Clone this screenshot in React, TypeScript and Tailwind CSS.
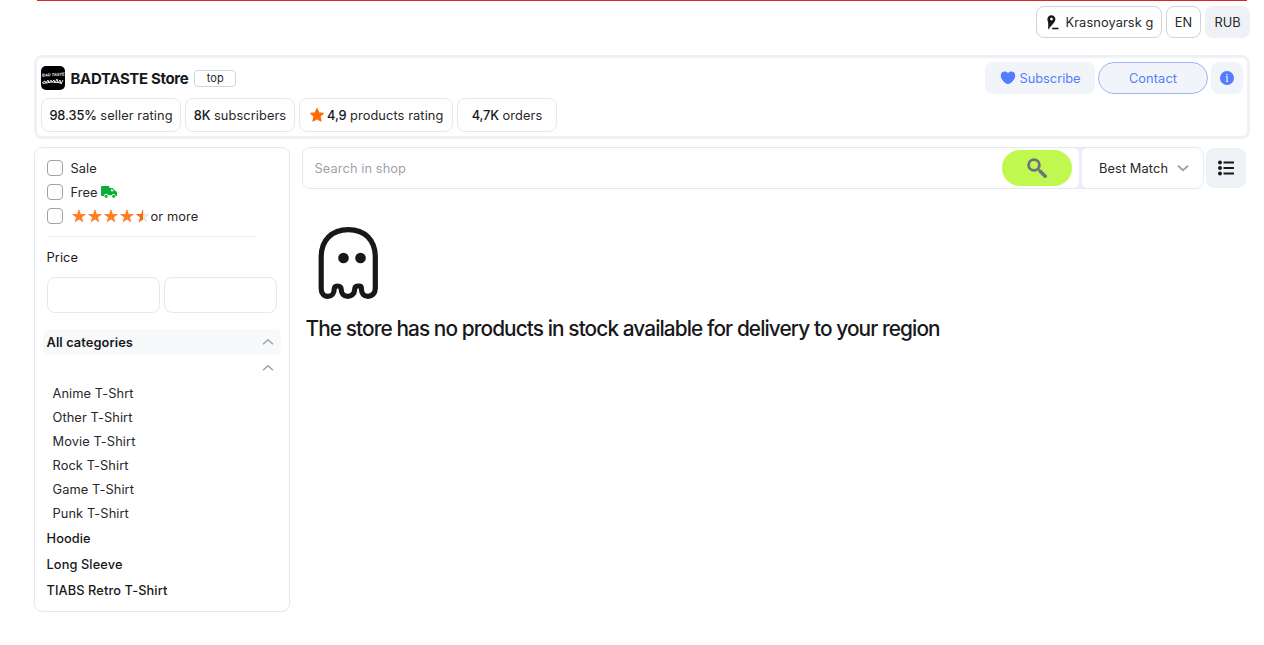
import { useState } from "react";
import type { ReactNode } from "react";
import clsx from "clsx";

const STATS = [
  { value: "98.35%", label: "seller rating", width: "w-[140px]" },
  { value: "8K", label: "subscribers", width: "w-[110px]" },
  { value: "4,9", label: "products rating", width: "w-[154px]", star: true },
  { value: "4,7K", label: "orders", width: "w-[100px]" },
];

const SUBCATEGORIES = [
  "Anime T-Shrt",
  "Other T-Shirt",
  "Movie T-Shirt",
  "Rock T-Shirt",
  "Game T-Shirt",
  "Punk T-Shirt",
];

const CATEGORIES = ["Hoodie", "Long Sleeve", "TIABS Retro T-Shirt"];

const STAR_PATH =
  "M8 .8 9.8 5.9 15.2 6.1 10.9 9.4 12.5 14.6 8 11.5 3.5 14.6 5.1 9.4 .8 6.1 6.2 5.9Z";

function Star({ half = false }: { half?: boolean }) {
  return (
    <svg viewBox="0 0 16 16" className="h-4 w-4">
      <path d={STAR_PATH} fill={half ? "#e5e7eb" : "#ff7f27"} />
      {half ? (
        <path d="M8 .8V11.5L3.5 14.6 5.1 9.4 .8 6.1 6.2 5.9Z" fill="#ff6a00" />
      ) : null}
    </svg>
  );
}

function RoundedStar() {
  return (
    <svg viewBox="0 0 16 16" className="mr-[2.5px] h-4 w-4">
      <path
        d="M8 1.7 9.9 5.9 14.3 6.4 11 9.4 12 14 8 11.7 4 14 5 9.4 1.7 6.4 6.1 5.9Z"
        fill="#ff6a00"
        stroke="#ff6a00"
        strokeWidth="1.2"
        strokeLinejoin="round"
      />
    </svg>
  );
}

function Pin() {
  return (
    <svg viewBox="0 0 12 15" className="mr-[7px] ml-0.5 h-[15px] w-3">
      <path
        fillRule="evenodd"
        d="M4.4.2C2 .2.4 1.9.4 4.3c0 1.7.8 2.500.8 4.200v5.200c0 .7.7.8 1 .1C3.200 11 8.400 7.800 8.400 4.300 8.400 1.900 6.800.2 4.400.2ZM4.500 2.700a1.400 1.400 0 1 1 0 2.800 1.400 1.400 0 0 1 0-2.800Z"
        fill="#18181b"
      />
      <path d="M5.200 13.500H11.500" stroke="#18181b" strokeWidth="1.600" />
    </svg>
  );
}

function StoreLogo() {
  return (
    <div className="flex h-6 w-6 flex-col items-center justify-center rounded-[5px] bg-black text-white">
      <span className="-rotate-3 font-['Liberation_Sans'] text-[4px] leading-[6px] font-bold tracking-normal whitespace-nowrap italic">
        BAD TASTE
      </span>
      <svg viewBox="0 0 22 7" className="h-[7px] w-[22px]">
        <path
          d="M0 5 3 3 4 5 6 2 7 5 9 2 10 4 12 2 13 5 15 1 16 5 18 2 19 6 21 2M1 5.500 10 4 20 5"
          fill="none"
          stroke="#e4e4e7"
          strokeWidth="1"
        />
      </svg>
    </div>
  );
}

function Truck() {
  return (
    <svg viewBox="0 0 16 12" className="ml-[3px] h-3 w-4">
      <path
        d="M1.200 0H7.300Q8.500 0 8.500 1.200V2H11.600L14.400 5Q16 5.200 16 6.600V10H14.800A2.200 2.200 0 0 0 10.600 9.300H7.300A2.200 2.200 0 0 0 3 10H1.200Q0 10 0 8.800V1.200Q0 0 1.200 0ZM10 3.300V5.200H13L11.200 3.300Z"
        fill="#0aad35"
      />
      <circle cx="5.100" cy="10.200" r="1.500" fill="#0aad35" />
      <circle cx="12.700" cy="10.200" r="1.500" fill="#0aad35" />
    </svg>
  );
}

function Chevron({ down = false }: { down?: boolean }) {
  return (
    <svg
      viewBox="0 0 12 8"
      className={clsx("h-2 w-3", down && "rotate-180")}
      fill="none"
      stroke="#a1a1aa"
      strokeWidth={down ? 1.8 : 1.5}
    >
      <path d="M1 6.200 6 1.800 11 6.200" />
    </svg>
  );
}

function Ghost() {
  return (
    <svg viewBox="0 0 60 72" className="ml-3 h-[72px] w-[60px]">
      <path
        d="M3.200 30C3.200 13 14 2.600 30.300 2.600S57.300 13 57.300 30V61.500C57.300 66 54 69.400 50 69.400S43.500 66.500 43.500 62.500 42.500 59 39.800 59 36.500 61 36.500 63.500 34 69.400 29.800 69.400 23.300 66.500 23.300 63 22 59 19.300 59 16 61 16 63.500 14 69.400 9.900 69.400 3.200 66 3.200 61.500Z"
        fill="none"
        stroke="#18181b"
        strokeWidth="5.200"
      />
      <circle cx="25.500" cy="31" r="5.300" fill="#18181b" />
      <circle cx="42.500" cy="31" r="5.300" fill="#18181b" />
    </svg>
  );
}

function FilterRow({ children }: { children: ReactNode }) {
  const [checked, setChecked] = useState(false);

  return (
    <label className="flex h-6 items-center">
      <input
        type="checkbox"
        checked={checked}
        onChange={() => setChecked(!checked)}
        className="mr-[7.5px] h-4 w-4 appearance-none rounded-[4px] border border-[#a1a1aa] bg-white checked:bg-[#557cff]"
      />
      {children}
    </label>
  );
}

function Sidebar() {
  return (
    <aside className="h-[465px] w-64 rounded-lg border border-[#e4e8f0] pt-2">
      <div className="px-3">
        <FilterRow>
          <span className="pt-0.5">Sale</span>
        </FilterRow>
        <FilterRow>
          <span className="pt-0.5">Free</span>
          <Truck />
        </FilterRow>
        <FilterRow>
          <Star />
          <Star />
          <Star />
          <Star />
          <Star half />
          <span className="pt-0.5">or more</span>
        </FilterRow>
        <div className="mt-2 w-[210px] border-t border-[#ececf0]" />
        <div className="mt-[11px] -ml-[0.5px] text-[#18181b]">Price</div>
        <div className="mt-[9px] flex gap-1">
          <input className="h-9 w-[113px] rounded-lg border border-[#e4e8f0] px-2" />
          <input className="h-9 w-[113px] rounded-lg border border-[#e4e8f0] px-2" />
        </div>
      </div>

      <div className="mt-4 ml-2 w-[238px]">
        <div className="flex h-[26px] items-center justify-between rounded-md bg-[#f7f9fb] pr-[7px] pl-[3.5px] font-semibold text-[#18181b]">
          <span className="pt-0.5">All categories</span>
          <Chevron />
        </div>
        <div className="flex h-[26px] items-center justify-end pr-[7px]">
          <Chevron />
        </div>
        <ul className="pl-[9.5px]">
          {SUBCATEGORIES.map((name) => (
            <li key={name} className="h-6 leading-[26px]">
              {name}
            </li>
          ))}
        </ul>
        <ul className="pl-[3.5px] font-medium text-[#18181b]">
          {CATEGORIES.map((name) => (
            <li key={name} className="h-[26px] leading-[28px]">
              {name}
            </li>
          ))}
        </ul>
      </div>
    </aside>
  );
}

function StoreHeader() {
  return (
    <header className="mt-[17px] flex h-[84px] justify-between rounded-lg border-[3px] border-[#eef2f7] p-1">
      <div>
        <div className="flex h-8 items-center">
          <StoreLogo />
          <h1 className="ml-[5.5px] pt-px text-[15px] leading-[23px] font-bold tracking-[-0.35px] text-[#18181b]">
            BADTASTE Store
          </h1>
          <span className="ml-1.5 flex h-[17px] w-[42px] items-center justify-center rounded-[4px] border border-[#cbd5e1] text-[11px] leading-[17px]">
            top
          </span>
        </div>
        <div className="mt-1 flex gap-1">
          {STATS.map((stat) => (
            <div
              key={stat.label}
              className={clsx(
                "flex h-[34px] items-center justify-center rounded-lg border border-[#e6e8f0] whitespace-nowrap",
                stat.width,
              )}
            >
              {stat.star ? <RoundedStar /> : null}
              <span className="mr-[3.5px] pt-0.5 font-medium tracking-[-0.1px] text-[#18181b]">
                {stat.value}
              </span>
              <span className="pt-0.5">{stat.label}</span>
            </div>
          ))}
        </div>
      </div>

      <div className="flex gap-[3px] text-[#557cff]">
        <button className="flex h-8 w-[110px] items-center justify-center rounded-lg bg-[#f1f5f9]">
          <svg viewBox="0 0 16 14" className="mr-[3px] ml-px h-[14px] w-4">
            <path
              d="M8 13.300C5 12.300 1 9 .8 5 .6 2 2.500.6 4.700.6 6.200.6 7.300 1.200 8 2.200 8.700 1.200 9.800.6 11.300.6 13.500.6 15.400 2 15.200 5 15 9 11 12.300 8 13.300Z"
              fill="#557cff"
            />
          </svg>
          <span className="pt-0.5 tracking-normal">Subscribe</span>
        </button>
        <button className="h-8 w-[110px] rounded-full border border-[#9db4ff] bg-[#f1f5f9] pt-0.5">
          Contact
        </button>
        <button
          aria-label="Info"
          className="flex h-8 w-8 items-center justify-center rounded-lg bg-[#f1f5f9]"
        >
          <span className="flex h-[14px] w-[14px] items-center justify-center rounded-full bg-[#557cff] font-['Liberation_Serif'] text-[12px] leading-none text-white">
            i
          </span>
        </button>
      </div>
    </header>
  );
}

function SearchBar() {
  const [query, setQuery] = useState("");

  return (
    <div className="flex items-center gap-0.5">
      <div className="flex h-[42px] w-[902px] overflow-hidden rounded-lg border border-[#e6e8f4] bg-[#eeeefa]">
        <div className="flex w-[776px] items-center rounded-r-md bg-white">
          <input
            value={query}
            onChange={(e) => setQuery(e.target.value)}
            placeholder="Search in shop"
            className="h-full flex-1 pl-[11.5px] outline-none placeholder:text-[#a1a1aa]"
          />
          <button
            aria-label="Search"
            className="mr-[7px] flex h-9 w-[70px] items-center justify-center rounded-full bg-[#c0f850]"
          >
            <svg viewBox="0 0 20 20" className="h-5 w-5" fill="none">
              <circle cx="7" cy="7" r="5.400" stroke="#6b7280" strokeWidth="2.800" />
              <path d="M10.800 10.800 13 13" stroke="#6b7280" strokeWidth="1.800" />
              <path
                d="M13.400 13.400 18.200 18.200"
                stroke="#6b7280"
                strokeWidth="3.600"
                strokeLinecap="round"
              />
            </svg>
          </button>
        </div>
        <button className="ml-[3px] flex flex-1 items-center rounded-l-md bg-white pl-[17px]">
          <span className="pt-0.5">Best Match</span>
          <span className="ml-[9px] flex">
            <Chevron down />
          </span>
        </button>
      </div>
      <button
        aria-label="List view"
        className="flex h-10 w-10 items-center justify-center rounded-lg bg-[#eef1f6]"
      >
        <svg viewBox="0 0 16 16" className="h-4 w-4" fill="#18181b">
          <circle cx="2" cy="2.500" r="2" />
          <circle cx="2" cy="8" r="2" />
          <circle cx="2" cy="13.500" r="2" />
          <path d="M5.500 1.500H16V3.500H5.500ZM5.500 7H16V9H5.500ZM5.500 12.500H16V14.500H5.500Z" />
        </svg>
      </button>
    </div>
  );
}

export default function App() {
  return (
    <div className="h-[645px] overflow-hidden bg-white pr-[14px] pl-[34px] font-[Inter,sans-serif] text-[12.8px] leading-5 tracking-[0.1px] text-[#27272a]">
      <div className="mx-[3px] h-px bg-[#dc2626]" />
      <nav className="mt-[5px] flex h-8 justify-end gap-1">
        <button className="flex w-[126px] items-center justify-center rounded-lg border border-[#cbd5e1]">
          <Pin />
          <span className="pt-0.5">Krasnoyarsk g</span>
        </button>
        <button className="w-[35px] rounded-lg border border-[#cbd5e1] pt-0.5 tracking-normal">
          EN
        </button>
        <button className="w-[45px] rounded-lg bg-[#eef2f7] pt-0.5 tracking-normal">
          RUB
        </button>
      </nav>

      <StoreHeader />

      <div className="mt-2 flex gap-3">
        <Sidebar />
        <main>
          <SearchBar />
          <div className="pt-[38px] pl-1">
            <Ghost />
            <h2 className="mt-4 -ml-[0.5px] text-[20.8px] leading-7 font-medium tracking-[-0.9px] whitespace-nowrap text-[#18181b]">
              The store has no products in stock available for delivery to your
              region
            </h2>
          </div>
        </main>
      </div>
    </div>
  );
}
